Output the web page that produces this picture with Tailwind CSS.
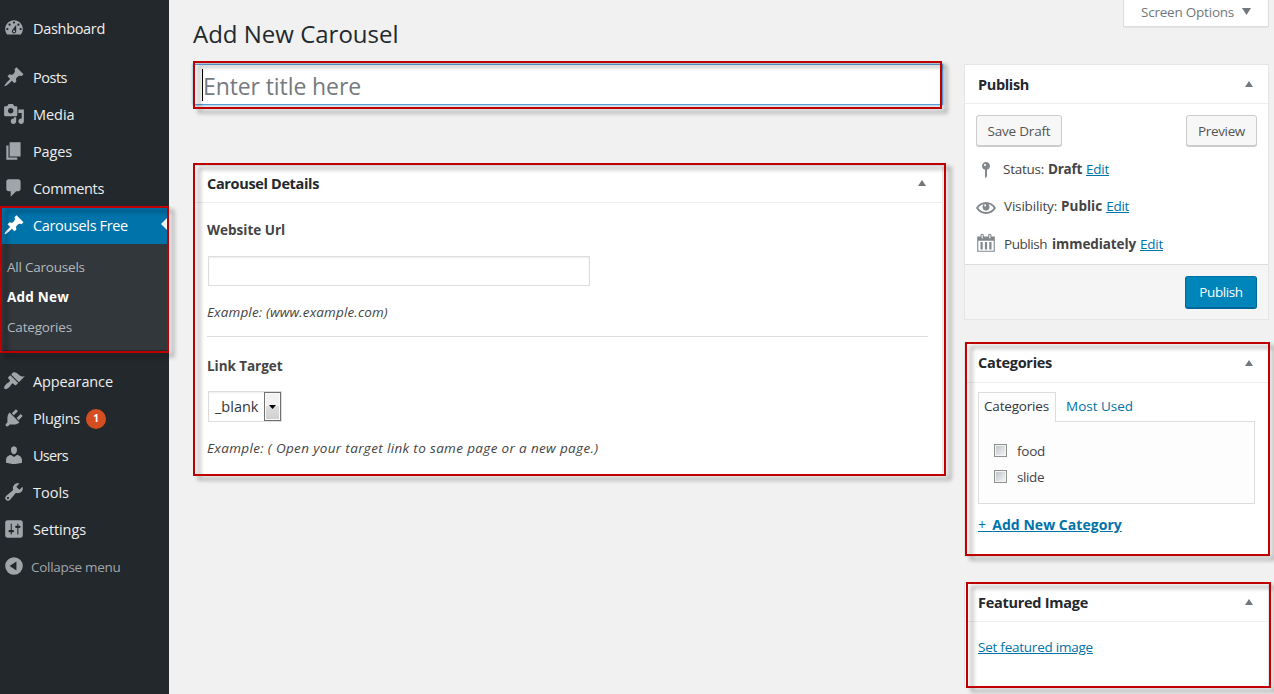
<!DOCTYPE html>
<html lang="en">
<head>
<meta charset="utf-8">
<title>Add New Carousel</title>
<script src="https://cdn.jsdelivr.net/npm/@tailwindcss/browser@4"></script>
</head>
<body class="w-[1274px] h-[694px] overflow-hidden bg-[#f1f1f1] font-['Open_Sans','Noto_Sans',sans-serif] text-[13.5px] text-[#444]">
<div class="relative flex h-[694px]">

  <!-- Admin menu -->
  <nav class="w-[169px] shrink-0 bg-[#23282d] pt-[10px] text-[14.5px] text-[#eee]">
    <a class="flex h-[37px] items-center gap-2 pl-[3px] mb-3"><svg class="-mt-[2px] size-[22px] fill-[#a0a5aa]" viewBox="0 0 20 20"><path d="M3.76 16h12.48c1.1-1.37 1.76-3.11 1.76-5 0-4.42-3.58-8-8-8s-8 3.58-8 8c0 1.89.66 3.63 1.76 5zM10 4c.55 0 1 .45 1 1s-.45 1-1 1-1-.45-1-1 .45-1 1-1zM6 6c.55 0 1 .45 1 1s-.45 1-1 1-1-.45-1-1 .45-1 1-1zm8 0c.55 0 1 .45 1 1s-.45 1-1 1-1-.45-1-1 .45-1 1-1zm-5.37 5.55L12 7v6c0 1.1-.9 2-2 2s-2-.9-2-2c0-.57.24-1.08.63-1.45zM4 10c.55 0 1 .45 1 1s-.45 1-1 1-1-.45-1-1 .45-1 1-1zm12 0c.55 0 1 .45 1 1s-.45 1-1 1-1-.45-1-1 .45-1 1-1zm-5 3c0-.55-.45-1-1-1s-1 .45-1 1 .45 1 1 1 1-.45 1-1z"/></svg><span class="tracking-[-0.31px]">Dashboard</span></a>
    <a class="flex h-[37px] items-center gap-2 pl-[3px]"><svg class="-mt-[2px] size-[22px] fill-[#a0a5aa]" viewBox="0 0 20 20"><path d="M10.44 3.02l1.82-1.82 6.36 6.35-1.83 1.82c-1.05-.68-2.48-.57-3.41.36l-.75.75c-.92.93-1.04 2.35-.35 3.41l-1.83 1.82-2.41-2.41-2.8 2.79c-.42.42-3.38 2.71-3.8 2.29s1.86-3.39 2.28-3.81l2.79-2.79L4.1 9.36l1.83-1.82c1.05.69 2.48.57 3.4-.36l.75-.75c.93-.92 1.05-2.35.36-3.41z"/></svg><span class="tracking-[-0.48px]">Posts</span></a>
    <a class="flex h-[37px] items-center gap-2 pl-[3px]"><svg class="-mt-[2px] size-[22px] fill-[#a0a5aa]" viewBox="0 0 20 20"><path d="M13 11V4c0-.55-.45-1-1-1h-1.67L9 1H5L3.67 3H2c-.55 0-1 .45-1 1v7c0 .55.45 1 1 1h10c.55 0 1-.45 1-1zM7 4.5c1.38 0 2.5 1.12 2.5 2.5S8.38 9.5 7 9.5 4.5 8.38 4.5 7 5.62 4.5 7 4.5zM14 6h5v10.5c0 1.38-1.12 2.5-2.5 2.5S14 17.88 14 16.5s1.12-2.5 2.5-2.5c.17 0 .34.02.5.05V9h-3V6zm-4 8.05V13h2v3.5c0 1.38-1.12 2.5-2.5 2.5S7 17.88 7 16.5 8.12 14 9.5 14c.17 0 .34.02.5.05z"/></svg><span class="tracking-[-0.05px]">Media</span></a>
    <a class="flex h-[37px] items-center gap-2 pl-[3px]"><svg class="-mt-[2px] size-[22px] fill-[#a0a5aa]" viewBox="0 0 20 20"><path d="M6 15V2h10v13H6zm-1 1h8v2H3V5h2v11z"/></svg><span class="tracking-[-0.15px]">Pages</span></a>
    <a class="flex h-[37px] items-center gap-2 pl-[3px]"><svg class="-mt-[2px] size-[22px] fill-[#a0a5aa]" viewBox="0 0 20 20"><path d="M5 2h9c1.1 0 2 .9 2 2v7c0 1.1-.9 2-2 2h-2l-5 5v-5H5c-1.1 0-2-.9-2-2V4c0-1.1.9-2 2-2z"/></svg><span class="tracking-[-0.36px]">Comments</span></a>
    <a class="flex h-[37px] items-center gap-2 bg-[#0073aa] pl-[3px] text-white"><svg class="-mt-[2px] size-[22px] fill-white" viewBox="0 0 20 20"><path d="M10.44 3.02l1.82-1.82 6.36 6.35-1.83 1.82c-1.05-.68-2.48-.57-3.41.36l-.75.75c-.92.93-1.04 2.35-.35 3.41l-1.83 1.82-2.41-2.41-2.8 2.79c-.42.42-3.38 2.71-3.8 2.29s1.86-3.39 2.28-3.81l2.79-2.79L4.1 9.36l1.83-1.82c1.05.69 2.48.57 3.4-.36l.75-.75c.93-.92 1.05-2.35.36-3.41z"/></svg><span class="tracking-[-0.35px]">Carousels Free</span><svg class="-mt-[3px] ml-auto h-4 w-2 fill-[#f1f1f1]" viewBox="0 0 8 16"><path d="M8 0v16L0 8z"/></svg></a>
    <div class="mb-[13px] flex h-[106px] flex-col bg-[#32373c] pt-2 pl-[7px] text-[13.5px] text-[#b4b9be]">
      <a class="flex h-[30px] items-center tracking-[-0.22px]">All Carousels</a>
      <a class="flex h-[30px] items-center font-bold tracking-[0.22px] text-white">Add New</a>
      <a class="flex h-[30px] items-center tracking-[-0.18px]">Categories</a>
    </div>
    <a class="flex h-[37px] items-center gap-2 pl-[3px]"><svg class="-mt-[2px] size-[22px] fill-[#a0a5aa]" viewBox="0 0 20 20"><path d="M14.48 11.06L7.41 3.99l1.5-1.5c.5-.56 2.3-.47 3.51.32 1.21.8 1.43 1.28 2.91 2.1 1.18.64 2.45 1.26 4.45.85zm-.71.71L6.7 4.7 4.93 6.47c-.39.39-.39 1.02 0 1.41l1.06 1.06c.39.39.39 1.03 0 1.42-.6.6-1.43 1.11-2.21 1.69-.35.26-.7.53-1.01.84C1.43 14.23.4 16.08 1.4 17.07c.99 1 2.84-.03 4.18-1.36.31-.31.58-.66.85-1.02.57-.78 1.08-1.61 1.69-2.21.39-.39 1.02-.39 1.41 0l1.06 1.06c.39.39 1.02.39 1.41 0z"/></svg><span class="tracking-[-0.11px]">Appearance</span></a>
    <a class="flex h-[37px] items-center gap-2 pl-[3px]"><svg class="-mt-[2px] size-[22px] fill-[#a0a5aa]" viewBox="0 0 20 20"><path d="M13.11 4.36L9.87 7.6 8 5.73l3.24-3.24c.35-.34 1.05-.2 1.56.32.52.51.66 1.21.31 1.55zm-8 1.77l.91-1.12 9.01 9.01-1.19.84c-.71.71-2.63 1.16-3.82 1.16H6.14L4.9 17.26c-.59.59-1.54.59-2.12 0-.59-.58-.59-1.53 0-2.12l1.24-1.24v-3.88c0-1.13.4-3.19 1.09-3.89zm7.26 3.97l3.24-3.24c.34-.35 1.04-.21 1.55.31.52.51.66 1.21.31 1.55l-3.24 3.25z"/></svg><span class="tracking-[-0.23px]">Plugins</span><span class="-ml-[2px] flex size-5 items-center justify-center rounded-full bg-[#d54e21] text-[10px] font-bold text-white">1</span></a>
    <a class="flex h-[37px] items-center gap-2 pl-[3px]"><svg class="-mt-[2px] size-[22px] fill-[#a0a5aa]" viewBox="0 0 20 20"><path d="M10 9.25c-2.27 0-2.73-3.44-2.73-3.44C7 4.02 7.82 2 9.97 2c2.16 0 2.98 2.02 2.71 3.81 0 0-.41 3.44-2.68 3.44zm0 2.57L12.72 10c2.39 0 4.52 2.33 4.52 4.53v2.49s-3.65 1.13-7.24 1.13c-3.65 0-7.24-1.13-7.24-1.13v-2.49c0-2.25 1.94-4.48 4.47-4.48z"/></svg><span class="tracking-[-0.7px]">Users</span></a>
    <a class="flex h-[37px] items-center gap-2 pl-[3px]"><svg class="-mt-[2px] size-[22px] fill-[#a0a5aa]" viewBox="0 0 20 20"><path d="M16.68 9.77c-1.34 1.34-3.3 1.67-4.95.99l-5.41 6.52c-.99.99-2.59.99-3.58 0s-.99-2.59 0-3.57l6.52-5.42c-.68-1.65-.35-3.61.99-4.95 1.28-1.28 3.12-1.62 4.72-1.06l-2.89 2.89 2.82 2.82 2.86-2.87c.53 1.58.18 3.39-1.08 4.65zM3.81 16.21c.4.39 1.04.39 1.43 0 .4-.4.4-1.04 0-1.43-.39-.4-1.03-.4-1.43 0-.39.39-.39 1.03 0 1.43z"/></svg><span>Tools</span></a>
    <a class="flex h-[37px] items-center gap-2 pl-[3px]"><svg class="-mt-[2px] size-[22px] fill-[#a0a5aa]" viewBox="0 0 20 20"><path d="M18 16V4c0-1.1-.9-2-2-2H4c-1.1 0-2 .9-2 2v12c0 1.1.9 2 2 2h12c1.1 0 2-.9 2-2zM8 11h1c.55 0 1 .45 1 1s-.45 1-1 1H8v1.5c0 .28-.22.5-.5.5s-.5-.22-.5-.5V13H6c-.55 0-1-.45-1-1s.45-1 1-1h1V5.5c0-.28.22-.5.5-.5s.5.22.5.5V11zm5-2h-1c-.55 0-1-.45-1-1s.45-1 1-1h1V5.5c0-.28.22-.5.5-.5s.5.22.5.5V7h1c.55 0 1 .45 1 1s-.45 1-1 1h-1v5.5c0 .28-.22.5-.5.5s-.5-.22-.5-.5V9z"/></svg><span class="tracking-[-0.1px]">Settings</span></a>
    <a class="flex h-[37px] items-center gap-1.5 pl-[3px] text-[13.5px] text-[#a0a5aa]"><svg class="-mt-[2px] size-[22px] fill-[#a0a5aa]" viewBox="0 0 20 20"><path fill-rule="evenodd" d="M10 2a8 8 0 1 1 0 16 8 8 0 0 1 0-16zm2.2 4L6 10l6.2 4z"/></svg><span class="pt-px tracking-[-0.3px]">Collapse menu</span></a>
  </nav>

  <div class="flex w-[1105px] flex-col pl-6">
    <header class="flex h-16 items-start justify-between pr-[5px]">
      <h1 class="pt-4 text-[24px] leading-9 text-[#23282d]">Add New Carousel</h1>
      <div class="flex h-[27px] w-[146px] items-center border border-t-0 border-[#ddd] bg-white pl-[17px] pb-[2px] text-[#72777c] shadow-[0_1px_1px_-1px_rgba(0,0,0,0.3)]"><span class="tracking-[-0.22px]">Screen Options</span><svg class="-mt-[2px] ml-[8px] h-[7px] w-[9px] fill-[#72777c]" viewBox="0 0 9 7"><path d="M0 0h9L4.5 7z"/></svg></div>
    </header>

    <div class="flex items-start gap-[21px]">
      <main class="w-[750px]">
        <div class="flex h-[41px] items-center border border-[#5b9dd9] bg-white pl-[8px] text-[23px] shadow-[0_0_2px_rgba(30,140,190,0.8)]"><span class="h-8 w-px bg-black"></span><span class="pt-1 tracking-[-0.1px] text-[#757a80]">Enter title here</span></div>

        <section class="mt-[60px] h-[310px] border border-[#e5e5e5] bg-white">
          <div class="flex h-[37px] items-center justify-between border-b border-[#eee] pr-[16px] pl-[13px]"><h2 class="text-[14.5px] font-bold tracking-[-0.34px] text-[#23282d]">Carousel Details</h2><svg class="-mt-[2px] h-[6px] w-[8px] fill-[#72777c]" viewBox="0 0 8 6"><path d="M4 0l4 6H0z"/></svg></div>
          <div class="px-[13px] pt-[17px]">
            <label class="block h-5 leading-5 font-bold">Website Url</label>
            <div class="mt-[16px] ml-px h-[30px] w-[382px] border border-[#ddd] bg-white shadow-[inset_0_1px_2px_rgba(0,0,0,0.07)]"></div>
            <p class="mt-[16px] h-5 leading-5 tracking-[0.14px] italic">Example: (www.example.com)</p>
            <div class="mt-[14px] mr-px h-px bg-[#ddd]"></div>
            <label class="mt-[19px] block h-5 leading-5 font-bold tracking-[-0.05px]">Link Target</label>
            <div class="mt-[15px] ml-px flex h-[31px] w-[74px] items-center border border-[#ddd] bg-white shadow-[inset_0_1px_2px_rgba(0,0,0,0.07)]">
              <span class="w-[55px] pl-[6px] text-[14.5px] text-[#32373c]">_blank</span>
              <span class="flex h-[29px] w-[17px] items-center justify-center border border-[#707070] bg-linear-to-b from-[#f2f2f2] from-50% via-[#ddd] via-50% to-[#cfcfcf] shadow-[inset_0_0_0_1px_#fbfbfb]"><svg class="h-[4px] w-[7px] fill-black" viewBox="0 0 7 4"><path d="M0 0h7L3.5 4z"/></svg></span>
            </div>
            <p class="mt-[16px] h-5 leading-5 tracking-[0.35px] whitespace-nowrap italic">Example: ( Open your target link to same page or a new page.)</p>
          </div>
        </section>
      </main>

      <aside class="w-[305px]">
        <section class="h-[256px] border border-[#e5e5e5] bg-white">
          <div class="flex h-[39px] items-center justify-between border-b border-[#eee] pr-[15px] pl-[13px]"><h2 class="pt-[2px] text-[14.5px] font-bold tracking-[-0.35px] text-[#23282d]">Publish</h2><svg class="h-[6px] w-[8px] fill-[#72777c]" viewBox="0 0 8 6"><path d="M4 0l4 6H0z"/></svg></div>
          <div class="flex h-[160px] flex-col px-[11px] pt-[11px]">
            <div class="flex justify-between">
              <button class="h-[31px] w-[86px] rounded-[3px] border border-[#ccc] bg-[#f7f7f7] pt-[2px] tracking-[-0.19px] text-[#555] shadow-[0_1px_0_#ccc]">Save Draft</button>
              <button class="h-[31px] w-[71px] rounded-[3px] border border-[#ccc] bg-[#f7f7f7] pt-[2px] tracking-[-0.35px] text-[#555] shadow-[0_1px_0_#ccc]">Preview</button>
            </div>
            <div class="mt-[5px] flex h-[37px] items-center"><svg class="size-5 fill-[#82878c]" viewBox="0 0 20 20"><path d="M14 6c0 1.86-1.28 3.41-3 3.86V16c0 1-2 2-2 2V9.86c-1.72-.45-3-2-3-3.86 0-2.21 1.79-4 4-4s4 1.79 4 4zM8 5c0 .55.45 1 1 1s1-.45 1-1-.45-1-1-1-1 .45-1 1z"/></svg><span class="ml-[7px] tracking-[-0.25px]">Status:</span><b class="ml-[4px] tracking-[-0.28px]">Draft</b><a class="ml-[4px] tracking-[-0.25px] text-[#0073aa] underline">Edit</a></div>
            <div class="flex h-[37px] items-center"><svg class="mt-[3px] size-5 fill-[#82878c]" viewBox="0 0 20 20"><path d="M19.7 9.4C17.7 6 14 3.9 10 3.9S2.3 6 .3 9.4L0 10l.3.6c2 3.4 5.7 5.5 9.7 5.5s7.7-2.1 9.7-5.5l.3-.6-.3-.6zM10 14.1c-3.1 0-6-1.6-7.7-4.1C3.6 8 5.7 6.6 8 6.1c-.9.6-1.5 1.7-1.5 2.9 0 1.9 1.6 3.5 3.5 3.5s3.5-1.6 3.5-3.5c0-1.2-.6-2.3-1.5-2.9 2.3.5 4.4 1.9 5.7 3.9-1.7 2.5-4.6 4.1-7.7 4.1z"/><path d="M7 6.500h6v4.500c-1.500 1.700-4.500 1.700-6 0z"/><path class="fill-white" d="M8.300 6.300c1-.4 1.900.1 1.900 1 0 .8-.8 1.400-1.800 1.200z"/></svg><span class="ml-[8px] tracking-[-0.17px]">Visibility:</span><b class="ml-[4px]">Public</b><a class="ml-[4px] tracking-[-0.25px] text-[#0073aa] underline">Edit</a></div>
            <div class="flex h-[38px] items-center"><svg class="-mt-[2px] size-[22px] -mx-px fill-[#82878c]" viewBox="0 0 20 20"><path d="M15 4h3v14H2V4h3V3c0-.83.67-1.5 1.5-1.5S8 2.17 8 3v1h4V3c0-.83.67-1.5 1.5-1.5S15 2.17 15 3v1zM6 3v2.5c0 .28.22.5.5.5s.5-.22.5-.5V3c0-.28-.22-.5-.5-.5S6 2.72 6 3zm7 0v2.5c0 .28.22.5.5.5s.5-.22.5-.5V3c0-.28-.22-.5-.5-.5s-.5.22-.5.5zm4 14V8H3v9h14zM7 9v7H5V9h2zm4 0v7H9V9h2zm4 0v7h-2V9h2z"/></svg><span class="ml-[8px] tracking-[-0.45px]">Publish</span><b class="ml-[5px] tracking-[-0.1px]">immediately</b><a class="ml-[4px] tracking-[-0.25px] text-[#0073aa] underline">Edit</a></div>
          </div>
          <div class="flex h-[55px] items-center justify-end border-t border-[#ddd] bg-[#f5f5f5] pr-[11px]"><button class="h-[33px] w-[72px] rounded-[3px] border border-[#006799] border-t-[#0073aa] bg-[#0085ba] pt-px tracking-[-0.4px] text-white shadow-[inset_0_-1px_0_#006799]">Publish</button></div>
        </section>

        <section class="mt-[23px] h-[214px] border border-[#e5e5e5] bg-white">
          <div class="flex h-[39px] items-center justify-between border-b border-[#eee] pr-[15px] pl-[13px]"><h2 class="text-[14.5px] font-bold tracking-[-0.28px] text-[#23282d]">Categories</h2><svg class="h-[6px] w-[8px] fill-[#72777c]" viewBox="0 0 8 6"><path d="M4 0l4 6H0z"/></svg></div>
          <div class="px-[13px] pt-[9px]">
            <div class="flex h-[29px]"><span class="z-10 flex h-[30px] w-[78px] items-center border border-b-0 border-[#ddd] bg-[#fdfdfd] pb-[2px] pl-[5px] tracking-[-0.18px] text-[#32373c]">Categories</span><span class="ml-[10px] flex h-[30px] items-center pb-px text-[#0073aa]">Most Used</span></div>
            <div class="flex h-[83px] flex-col border border-[#ddd] bg-[#fdfdfd] pt-[16px] pl-[15px]">
              <label class="flex h-[26px] items-center"><span class="-mt-[2px] size-[13px] border border-[#8e8f8f] bg-linear-to-br from-[#bcc1c6] to-[#f8f8f8] shadow-[inset_0_0_0_1px_#f4f4f4]"></span><span class="ml-[10px] tracking-[-0.25px]">food</span></label>
              <label class="flex h-[26px] items-center"><span class="-mt-[2px] size-[13px] border border-[#8e8f8f] bg-linear-to-br from-[#bcc1c6] to-[#f8f8f8] shadow-[inset_0_0_0_1px_#f4f4f4]"></span><span class="ml-[10px] tracking-[-0.4px]">slide</span></label>
            </div>
            <a class="mt-[11px] block h-5 text-[14px] leading-5 font-bold tracking-[0.04px] text-[#0073aa] underline"><span class="font-normal tracking-[1.3px]">+ </span>Add New Category</a>
          </div>
        </section>

        <section class="mt-[25px] h-[105px] border border-[#e5e5e5] bg-white">
          <div class="flex h-[39px] items-center justify-between border-b border-[#eee] pr-[15px] pl-[13px]"><h2 class="pt-[2px] text-[14.5px] font-bold tracking-[-0.27px] text-[#23282d]">Featured Image</h2><svg class="h-[6px] w-[8px] fill-[#72777c]" viewBox="0 0 8 6"><path d="M4 0l4 6H0z"/></svg></div>
          <a class="mt-[15px] ml-[13px] block h-5 leading-5 tracking-[-0.24px] text-[#0073aa] underline">Set featured image</a>
        </section>
      </aside>
    </div>
  </div>

  <!-- Highlight frames laid over the page -->
  <div class="absolute top-[206px] left-0 h-[147px] w-[169px] border-2 border-[#c00000] drop-shadow-[5px_4px_2px_rgba(0,0,0,0.4)]"></div>
  <div class="absolute top-[61px] left-[193px] h-[48px] w-[749px] border-2 border-[#c00000] drop-shadow-[5px_4px_2px_rgba(0,0,0,0.4)]"></div>
  <div class="absolute top-[163px] left-[193px] h-[313px] w-[753px] border-2 border-[#c00000] drop-shadow-[5px_4px_2px_rgba(0,0,0,0.4)]"></div>
  <div class="absolute top-[342px] left-[965px] h-[214px] w-[305px] border-2 border-[#c00000] drop-shadow-[5px_4px_2px_rgba(0,0,0,0.4)]"></div>
  <div class="absolute top-[582px] left-[966px] h-[106px] w-[305px] border-2 border-[#c00000] drop-shadow-[5px_4px_2px_rgba(0,0,0,0.4)]"></div>
</div>
</body>
</html>
